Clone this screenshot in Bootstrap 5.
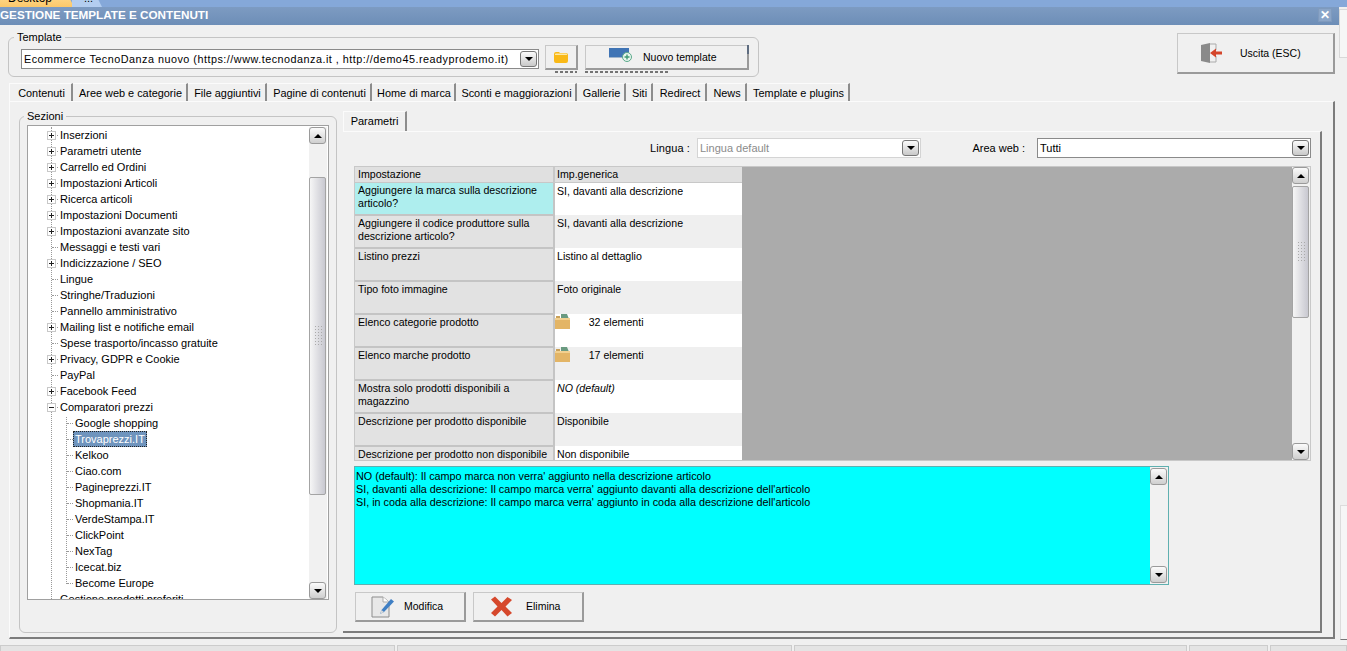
<!DOCTYPE html>
<html lang="it">
<head>
<meta charset="utf-8">
<title>Gestione template e contenuti</title>
<link href="https://cdn.jsdelivr.net/npm/bootstrap@5.3.0/dist/css/bootstrap.min.css" rel="stylesheet">
<style>
html,body{height:651px;overflow:hidden}
body{background:#f0f0f0;color:#000;font:11px/13px "Liberation Sans",Arial,sans-serif}
.topstrip{height:7px;background:#85a8d9;overflow:hidden}
.dtab{height:20px;margin-top:-9px;width:76px;padding:1px 0 0 8px;background:linear-gradient(#ffe09a,#fbc25e);clip-path:polygon(0 0,66px 0,100% 100%,0 100%);font-size:12px}
.dtab2{height:20px;margin:-9px 0 0 -4px;width:32px;padding:1px 0 0 12px;background:#b3cdf0;clip-path:polygon(0 0,22px 0,100% 100%,0 100%)}
.winleft{width:1339px}
.winright{width:8px}
.edge1{height:49px;margin-top:2px;background:#f6f6f6;border:1px solid #d8d8d8;border-right:0}
.edge2{height:135px;margin-top:447px;margin-left:1px;background:#f6f6f6;border:1px solid #dcdcdc;border-right:0;border-bottom:1px solid #777}
.titlebar{height:18px;background:linear-gradient(#7d9bc2,#6d8eb7);color:#fff;font-weight:700;font-size:11.7px;line-height:16px;white-space:nowrap}
.closex{width:14px;height:14px;margin:1px 7px 0 0;background:#8aa5c8;border:1px solid #7f9abd;font-size:12px;line-height:12px;text-align:center}
.content{height:620px}
.toprow{height:58px;padding-left:8px}
.fs{border:1px solid #c4c4c4;border-radius:6px;margin:0;min-width:0;padding:0}
.fs>legend{float:none;width:auto;font-size:11px;line-height:13px;margin:0 0 0 5px;padding:0 3px}
.fs-tpl{width:751px;height:46px;margin-top:6px;position:relative}
.tpl-body{padding:5px 0 0 12px}
.combo{height:20px;background:#fff;border:1px solid #8a8a8a;padding:0 1px 0 2px;white-space:nowrap;overflow:hidden}
.combo.off{border-color:#d4d4d4;color:#8b8b8b}
.combo-tpl{width:518px;letter-spacing:.5px;font-size:10.8px}
.combo-lang{width:224px}
.combo-area{width:274px}
.combo-btn{width:17px;height:16px;flex:none;background:linear-gradient(#fbfbfb,#c9c9c9);border:1px solid #777;border-radius:3px}
.tri-d,.tri-u{width:0;height:0;border-left:4px solid transparent;border-right:4px solid transparent}
.tri-d{border-top:4px solid #000}
.tri-u{border-bottom:4px solid #000}
.wbtn{--bs-btn-padding-x:0;--bs-btn-padding-y:0;--bs-btn-font-size:10.5px;--bs-btn-line-height:13px;--bs-btn-border-radius:0;--bs-btn-color:#000;--bs-btn-hover-color:#000;background:#f0f0f0;border:1px solid #c8c8c8;border-right:2px solid #9a9a9a;border-bottom:2px solid #9a9a9a;flex:none}
.b-folder{width:33px;height:25px;margin-left:6px;margin-top:-4px}
.b-new{width:164px;height:25px;margin-left:7px;margin-top:-4px;padding-left:23px;position:relative}
.b-new::after{content:"";position:absolute;right:-2px;top:-1px;width:2px;height:9px;background:#5e6c80}
.b-new svg{margin-top:-4px;margin-right:10px}
.b-exit{width:158px;height:41px;margin:8px 4px 0 auto;padding-left:22px}
.b-exit svg{margin-right:18px}
.b-act{width:111px;height:30px;padding-left:15px}
.b-del{padding-left:16px}
.b-act svg{margin-right:9px}
.b-del svg{margin-right:13px}
.peek{position:absolute;top:27px;height:2px;background:repeating-linear-gradient(90deg,#555 0 3px,transparent 3px 5px);opacity:.8}
.peek-a{left:546px;width:22px}
.peek-b{left:576px;width:83px}
.maintabs{height:18px;margin:0 0 0 9px;padding:0;border:0;flex-wrap:nowrap}
.maintabs .nav-link,.maintabs .nav-link.active{height:18px;padding:3px 0 0 2px;margin:0;border:0;border-top:1px solid #fbfbfb;border-right:2px solid #8c8c8c;border-radius:0;color:#000;background:#f0f0f0;text-align:center;white-space:nowrap;font-size:10.9px;line-height:13px}
.maintabs .nav-item:nth-child(1) .nav-link{width:64px;border-left:1px solid #fbfbfb}
.maintabs .nav-item:nth-child(2) .nav-link{width:115px}
.maintabs .nav-item:nth-child(3) .nav-link{width:79px}
.maintabs .nav-item:nth-child(4) .nav-link{width:105px}
.maintabs .nav-item:nth-child(5) .nav-link{width:84px}
.maintabs .nav-item:nth-child(6) .nav-link{width:121px}
.maintabs .nav-item:nth-child(7) .nav-link{width:49px}
.maintabs .nav-item:nth-child(8) .nav-link{width:27px}
.maintabs .nav-item:nth-child(9) .nav-link{width:54px}
.maintabs .nav-item:nth-child(10) .nav-link{width:40px}
.maintabs .nav-item:nth-child(11) .nav-link{width:103px}
.panel-out{width:1326px;height:538px;margin-left:9px;border-top:1px solid #fbfbfb;border-left:1px solid #fbfbfb;border-right:2px solid #7c7c7c;border-bottom:2px solid #7c7c7c;padding:8px 0 0 9px}
.fs-sez{width:318px;height:523px}
.fs-sez>legend{margin-left:4px}
.sez-body{padding:2px 0 0 7px}
.tree{width:302px;height:475px;background:#fff;border:1px solid #a0a0a0;overflow:hidden;position:relative;padding-top:1px}
.treelist{width:281px;height:472px;overflow:hidden;position:relative}
.vline,.vline2{position:absolute;border-left:1px dotted #999}
.vline{left:23px;top:0;height:472px}
.vline2{left:38px;top:290px;height:167px}
.node{height:16px;line-height:16px;white-space:nowrap;display:flex;align-items:center;position:relative;padding-left:31px}
.node.sub{padding-left:46px}
.node::before{content:"";position:absolute;left:24px;top:8px;width:8px;border-top:1px dotted #999}
.node.sub::before{left:39px}
.txt{padding:0 1px;background:#fff;position:relative}
.pm{position:absolute;left:19px;top:4px;width:9px;height:9px;background:#fff;border:1px solid #c8c8c8;z-index:1}
.pm::before{content:"";position:absolute;left:1px;right:1px;top:3px;height:1px;background:#222}
.pm.plus::after{content:"";position:absolute;top:1px;bottom:1px;left:3px;width:1px;background:#222}
.sel{background:#6f94bd;color:#fff;outline:1px dotted #222;outline-offset:-1px;padding:0 2px;margin-left:-1px}
.sb{width:18px;flex:none;background:#f1f1f1;height:100%}
.sbb{height:17px;flex:none;background:linear-gradient(#fbfbfb,#cfcfcf);border:1px solid #9a9a9a;border-radius:3px;margin:0 1px 0 0}
.sbt{flex:none;background:linear-gradient(90deg,#f6f6f6,#c8c8d0);border:1px solid #a4a4a4;border-radius:2px;margin-right:1px}
.grip{width:8px;height:22px;background:radial-gradient(circle,#aaa 0.6px,transparent 1px) 0 0/3px 3px}
.tree-thumb{height:318px;margin-top:33px}
.tree-sp{height:87px}
.rightcol{margin-left:6px;width:979px}
.innertabs{height:20px;margin:1px 0 0 0;border:0}
.innertabs .nav-link,.innertabs .nav-link.active{width:64px;height:20px;padding:3px 0 0;border:0;border-top:1px solid #fbfbfb;border-left:1px solid #fbfbfb;border-right:2px solid #8c8c8c;border-radius:0;color:#000;background:#f0f0f0;font-size:11px;line-height:13px;text-align:center}
.panel-in{width:979px;height:502px;border-top:1px solid #fbfbfb;border-right:2px solid #7c7c7c;border-bottom:2px solid #7c7c7c;padding:6px 0 0 11px}
.filters{height:20px;width:957px}
.lbl-l{width:343px;text-align:right;padding-right:7px;letter-spacing:.1px}
.lbl-a{width:116px;text-align:right;padding-right:12px}
.gridwrap{width:957px;height:295px;margin-top:8px;background:#ababab;border:1px solid #c8c8c8;overflow:hidden}
.gridtbl{width:387px;flex:none;height:293px;overflow:hidden;background:#f0f0f0}
.gridtbl .table{--bs-table-bg:transparent;--bs-table-color:#000;width:387px;table-layout:fixed;margin:0;border-collapse:collapse}
.gridtbl .c1{width:199px}
.gridtbl th,.gridtbl td{font-weight:400;padding:1px 0 0 3px;border:0;vertical-align:top;line-height:13px;font-size:10.6px;box-shadow:none}
.gridtbl th{height:15px;padding-top:1px;background:#e0e0e0;border-right:2px solid #c8c8c8;border-bottom:1px solid #c8c8c8}
.gridtbl th+th{border-right:0;padding-left:2px}
.gridtbl td{height:33px}
.gridtbl td:first-child{background:#e2e2e2;border-right:2px solid #c4c4c4;border-bottom:2px solid #c4c4c4}
.gridtbl tr.odd td+td{background:#fff}
.gridtbl tr.even td+td{background:#efefef}
.gridtbl td.hit:first-child{background:#aeeeee}
.gridtbl td.val{padding:2px 0 0 2px}
.gridtbl .ico{display:inline-block;vertical-align:top;margin:-2px 3px 0 -2px}
.grid-sp{flex:1}
.grid-thumb{height:132px;margin-top:2px}
.infobox{width:815px;height:119px;margin-top:5px;background:#0ff;border:1px solid #5fb0b0;line-height:13px;font-size:10.8px}
.info-sb{width:18px;height:117px;padding:1px 0;background:#f1f1f1}
.info-text{flex:1;padding:3px 2px 0 1px}
.actions{margin:7px 0 0 1px;gap:7px}
.statusbar{height:6px;overflow:hidden;gap:2px}
.statusbar span{display:block;height:6px;background:#e4e4e4;border:1px solid #ccc;border-bottom:0}
.statusbar span:nth-child(1){width:395px}
.statusbar span:nth-child(2){width:395px}
.statusbar span:nth-child(3){width:393px}
.statusbar span:nth-child(4){width:79px}
.statusbar span:nth-child(5){flex:1}
</style>
</head>
<body>
<div class="topstrip d-flex">
  <div class="dtab">Desktop</div>
  <div class="dtab2">...</div>
</div>
<div class="d-flex">
  <div class="winleft">
    <div class="titlebar d-flex justify-content-between">
      <span>GESTIONE TEMPLATE E CONTENUTI</span>
      <span class="closex">✕</span>
    </div>
    <div class="content">
      <div class="toprow d-flex">
        <fieldset class="fs fs-tpl">
          <legend>Template</legend>
          <div class="tpl-body d-flex align-items-start">
            <div class="combo combo-tpl d-flex align-items-center justify-content-between">
              <span>Ecommerce TecnoDanza nuovo (https://www.tecnodanza.it , http://demo45.readyprodemo.it)</span>
              <span class="combo-btn d-flex align-items-center justify-content-center"><i class="tri-d"></i></span>
            </div>
            <button class="btn wbtn b-folder d-flex align-items-center justify-content-center" type="button">
              <svg width="16" height="13" viewBox="0 0 16 13"><path d="M1 3q0-2 2-2h3l1 1h6q2 0 2 2v6q0 2-2 2H3q-2 0-2-2z" fill="#f9b917"/><path d="M2 3.500q0-1 1-1h10q1 0 1 1v.5H2z" fill="#fdeaa8"/></svg>
            </button>
            <button class="btn wbtn b-new d-flex align-items-center" type="button">
              <svg width="24" height="14" viewBox="0 0 24 14"><path d="M0 0h20v9H0z" fill="#3f74b5"/><path d="M0 9h14v1H0z" fill="#9fb4cc"/><circle cx="18" cy="9" r="4.5" fill="#e8f4ee" stroke="#5aa98a"/><path d="M18 6.500v5M15.500 9h5" stroke="#3f9a74" stroke-width="1.4"/></svg>
              <span>Nuovo template</span>
            </button>
          </div>
          <div class="peek peek-a"></div>
          <div class="peek peek-b"></div>
        </fieldset>
        <button class="btn wbtn b-exit d-flex align-items-center" type="button">
          <svg width="22" height="22" viewBox="0 0 22 22"><path d="M1 3l9-2v20l-9-2z" fill="#8a8a8a"/><path d="M10 2h6v6M16 14v6h-6" fill="none" stroke="#aaa"/><path d="M10 11l6-4.500v3h6v3h-6v3z" fill="#d4452b"/></svg>
          <span>Uscita (ESC)</span>
        </button>
      </div>
      <ul class="nav nav-tabs maintabs">
        <li class="nav-item"><a class="nav-link active" href="#">Contenuti</a></li>
        <li class="nav-item"><a class="nav-link" href="#">Aree web e categorie</a></li>
        <li class="nav-item"><a class="nav-link" href="#">File aggiuntivi</a></li>
        <li class="nav-item"><a class="nav-link" href="#">Pagine di contenuti</a></li>
        <li class="nav-item"><a class="nav-link" href="#">Home di marca</a></li>
        <li class="nav-item"><a class="nav-link" href="#">Sconti e maggiorazioni</a></li>
        <li class="nav-item"><a class="nav-link" href="#">Gallerie</a></li>
        <li class="nav-item"><a class="nav-link" href="#">Siti</a></li>
        <li class="nav-item"><a class="nav-link" href="#">Redirect</a></li>
        <li class="nav-item"><a class="nav-link" href="#">News</a></li>
        <li class="nav-item"><a class="nav-link" href="#">Template e plugins</a></li>
      </ul>
      <div class="panel-out d-flex">
        <fieldset class="fs fs-sez">
          <legend>Sezioni</legend>
          <div class="sez-body">
          <div class="tree d-flex">
            <div class="treelist">
              <div class="vline"></div>
              <div class="vline2"></div>
              <div class="node"><i class="pm plus"></i><span class="txt">Inserzioni</span></div>
              <div class="node"><i class="pm plus"></i><span class="txt">Parametri utente</span></div>
              <div class="node"><i class="pm plus"></i><span class="txt">Carrello ed Ordini</span></div>
              <div class="node"><i class="pm plus"></i><span class="txt">Impostazioni Articoli</span></div>
              <div class="node"><i class="pm plus"></i><span class="txt">Ricerca articoli</span></div>
              <div class="node"><i class="pm plus"></i><span class="txt">Impostazioni Documenti</span></div>
              <div class="node"><i class="pm plus"></i><span class="txt">Impostazioni avanzate sito</span></div>
              <div class="node"><span class="txt">Messaggi e testi vari</span></div>
              <div class="node"><i class="pm plus"></i><span class="txt">Indicizzazione / SEO</span></div>
              <div class="node"><span class="txt">Lingue</span></div>
              <div class="node"><span class="txt">Stringhe/Traduzioni</span></div>
              <div class="node"><span class="txt">Pannello amministrativo</span></div>
              <div class="node"><i class="pm plus"></i><span class="txt">Mailing list e notifiche email</span></div>
              <div class="node"><span class="txt">Spese trasporto/incasso gratuite</span></div>
              <div class="node"><i class="pm plus"></i><span class="txt">Privacy, GDPR e Cookie</span></div>
              <div class="node"><span class="txt">PayPal</span></div>
              <div class="node"><i class="pm plus"></i><span class="txt">Facebook Feed</span></div>
              <div class="node"><i class="pm"></i><span class="txt">Comparatori prezzi</span></div>
              <div class="node sub"><span class="txt">Google shopping</span></div>
              <div class="node sub"><span class="txt sel">Trovaprezzi.IT</span></div>
              <div class="node sub"><span class="txt">Kelkoo</span></div>
              <div class="node sub"><span class="txt">Ciao.com</span></div>
              <div class="node sub"><span class="txt">Pagineprezzi.IT</span></div>
              <div class="node sub"><span class="txt">Shopmania.IT</span></div>
              <div class="node sub"><span class="txt">VerdeStampa.IT</span></div>
              <div class="node sub"><span class="txt">ClickPoint</span></div>
              <div class="node sub"><span class="txt">NexTag</span></div>
              <div class="node sub"><span class="txt">Icecat.biz</span></div>
              <div class="node sub"><span class="txt">Become Europe</span></div>
              <div class="node"><span class="txt">Gestione prodotti preferiti</span></div>
            </div>
            <div class="sb d-flex flex-column">
              <div class="sbb d-flex align-items-center justify-content-center"><i class="tri-u"></i></div>
              <div class="sbt tree-thumb d-flex align-items-center justify-content-center"><i class="grip"></i></div>
              <div class="tree-sp"></div>
              <div class="sbb d-flex align-items-center justify-content-center"><i class="tri-d"></i></div>
            </div>
          </div>
          </div>
        </fieldset>
        <div class="rightcol">
          <ul class="nav nav-tabs innertabs">
            <li class="nav-item"><a class="nav-link active" href="#">Parametri</a></li>
          </ul>
          <div class="panel-in">
            <div class="filters d-flex align-items-center">
              <span class="lbl-l">Lingua :</span>
              <div class="combo combo-lang off d-flex align-items-center justify-content-between">
                <span>Lingua default</span>
                <span class="combo-btn d-flex align-items-center justify-content-center"><i class="tri-d"></i></span>
              </div>
              <span class="lbl-a">Area web :</span>
              <div class="combo combo-area d-flex align-items-center justify-content-between">
                <span>Tutti</span>
                <span class="combo-btn d-flex align-items-center justify-content-center"><i class="tri-d"></i></span>
              </div>
            </div>
            <div class="gridwrap d-flex">
              <div class="gridtbl">
                <table class="table">
                  <colgroup><col class="c1"><col></colgroup>
                  <thead><tr><th>Impostazione</th><th>Imp.generica</th></tr></thead>
                  <tbody>
                    <tr class="odd"><td class="hit">Aggiungere la marca sulla descrizione articolo?</td><td class="val">SI, davanti alla descrizione</td></tr>
                    <tr class="even"><td>Aggiungere il codice produttore sulla descrizione articolo?</td><td class="val">SI, davanti alla descrizione</td></tr>
                    <tr class="odd"><td>Listino prezzi</td><td class="val">Listino al dettaglio</td></tr>
                    <tr class="even"><td>Tipo foto immagine</td><td class="val">Foto originale</td></tr>
                    <tr class="odd"><td>Elenco categorie prodotto</td><td class="val"><svg class="ico" width="16" height="15" viewBox="0 0 16 15"><path d="M6 0h6l2 5H6z" fill="#6a9a80"/><path d="M1 2h4v2H1z" fill="#c9a15a"/><path d="M0 4h15v11H0z" fill="#e3b566"/><path d="M0 4h15v2H0z" fill="#f2d08f"/></svg><span>&nbsp;&nbsp;&nbsp;&nbsp;&nbsp;32 elementi</span></td></tr>
                    <tr class="even"><td>Elenco marche prodotto</td><td class="val"><svg class="ico" width="16" height="15" viewBox="0 0 16 15"><path d="M6 0h6l2 5H6z" fill="#6a9a80"/><path d="M1 2h4v2H1z" fill="#c9a15a"/><path d="M0 4h15v11H0z" fill="#e3b566"/><path d="M0 4h15v2H0z" fill="#f2d08f"/></svg><span>&nbsp;&nbsp;&nbsp;&nbsp;&nbsp;17 elementi</span></td></tr>
                    <tr class="odd"><td>Mostra solo prodotti disponibili a magazzino</td><td class="val fst-italic">NO (default)</td></tr>
                    <tr class="even"><td>Descrizione per prodotto disponibile</td><td class="val">Disponibile</td></tr>
                    <tr class="odd"><td>Descrizione per prodotto non disponibile</td><td class="val">Non disponibile</td></tr>
                  </tbody>
                </table>
              </div>
              <div class="grid-sp"></div>
              <div class="sb d-flex flex-column">
                <div class="sbb d-flex align-items-center justify-content-center"><i class="tri-u"></i></div>
                <div class="sbt grid-thumb d-flex align-items-center justify-content-center"><i class="grip"></i></div>
                <div class="flex-grow-1"></div>
                <div class="sbb d-flex align-items-center justify-content-center"><i class="tri-d"></i></div>
              </div>
            </div>
            <div class="infobox d-flex">
              <div class="info-text">NO (default): Il campo marca non verra' aggiunto nella descrizione articolo<br>SI, davanti alla descrizione: Il campo marca verra' aggiunto davanti alla descrizione dell'articolo<br>SI, in coda alla descrizione: Il campo marca verra' aggiunto in coda alla descrizione dell'articolo</div>
              <div class="info-sb d-flex flex-column justify-content-between">
                <div class="sbb d-flex align-items-center justify-content-center"><i class="tri-u"></i></div>
                <div class="sbb d-flex align-items-center justify-content-center"><i class="tri-d"></i></div>
              </div>
            </div>
            <div class="actions d-flex">
              <button class="btn wbtn b-act d-flex align-items-center" type="button">
                <svg width="24" height="22" viewBox="0 0 24 22"><path d="M1 1h11l6 5v15H1z" fill="#e8e8e8" stroke="#8c8c8c"/><path d="M12 1v5h6" fill="#fff" stroke="#aaa"/><path d="M9 18l1.500-4L20 3l3 2.500-10 10.500z" fill="#3f7fc4"/><path d="M9 18l1.500-4 2.500 2z" fill="#d8d8d8"/></svg>
                <span>Modifica</span>
              </button>
              <button class="btn wbtn b-act b-del d-flex align-items-center" type="button">
                <svg width="23" height="21" viewBox="0 0 23 21"><path d="M1 3.500l4-3 6.500 6.500L17.500 1l4.500 3-6.500 6.500 6.500 6.500-4.500 3.500-6-6.500L5 20.500 1 17l6.500-6.500z" fill="#d6482c"/></svg>
                <span>Elimina</span>
              </button>
            </div>
          </div>
        </div>
      </div>
    </div>
  </div>
  <div class="winright">
    <div class="edge1"></div>
    <div class="edge2"></div>
  </div>
</div>
<div class="statusbar d-flex">
  <span></span><span></span><span></span><span></span><span></span>
</div>
</body>
</html>
